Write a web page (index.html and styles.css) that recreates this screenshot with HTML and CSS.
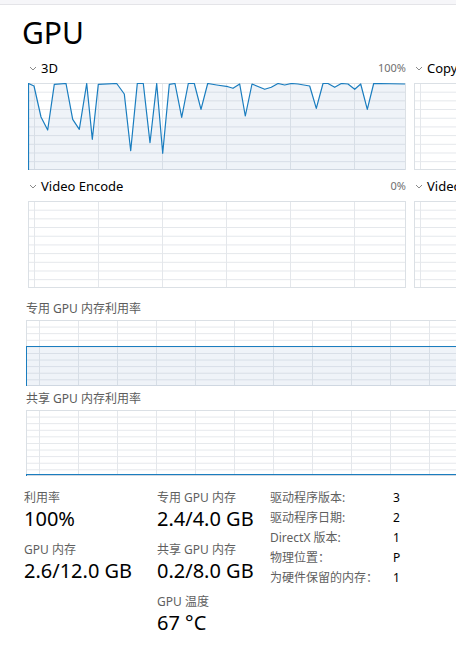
FILE: index.html
```html
<!DOCTYPE html>
<html lang="zh-CN">
<head>
    <meta charset="UTF-8">
    <meta name="viewport" content="width=device-width, initial-scale=1.0">
    <title>GPU</title>
    <link rel="stylesheet" href="styles.css">
</head>
<body>
    <div class="topbar"></div>

    <main class="page">
        <h1 class="title">GPU</h1>

        <section class="engines">
            <div class="engine">
                <div class="engine-head">
                    <svg class="chevron" viewBox="0 0 8 5"><path d="M1 1 L4 4 L7 1"/></svg>
                    <span class="engine-name">3D</span>
                    <span class="engine-pct">100%</span>
                </div>
                <div class="chart">
                    <svg class="chart-plot" viewBox="0 0 378 87" preserveAspectRatio="none">
                        <polygon class="plot-fill" points="0.5,87 0.5,0.5 6,3 13,34 19.7,47 26.3,1.3 38,0.5 44.7,36.3 51.3,46.3 58.7,0.5 64.3,56.3 70.3,1.3 88.7,0.5 96.3,11 102.7,67.7 109.3,0.5 115.3,0.5 122,59.7 128.7,0.5 134.7,70.3 141.3,1.3 147,0.5 153.7,34.3 160.3,0.5 166.3,0.5 173,26.3 179.7,0.5 188.7,2 200,3.7 205,5.3 211.7,1 217.3,33 224,1 236.7,6.3 243.3,4.3 250,0.5 256.7,2 263.3,0.5 270,1 281.7,3 288.3,25.3 295,0.5 300,0.5 306.7,4.3 313.3,0.5 320,1 326.7,6.3 332.7,1 339.3,26.3 345.7,0.5 377,1 377,87"/>
                        <polyline class="plot-line" points="0.5,87 0.5,0.5 6,3 13,34 19.7,47 26.3,1.3 38,0.5 44.7,36.3 51.3,46.3 58.7,0.5 64.3,56.3 70.3,1.3 88.7,0.5 96.3,11 102.7,67.7 109.3,0.5 115.3,0.5 122,59.7 128.7,0.5 134.7,70.3 141.3,1.3 147,0.5 153.7,34.3 160.3,0.5 166.3,0.5 173,26.3 179.7,0.5 188.7,2 200,3.7 205,5.3 211.7,1 217.3,33 224,1 236.7,6.3 243.3,4.3 250,0.5 256.7,2 263.3,0.5 270,1 281.7,3 288.3,25.3 295,0.5 300,0.5 306.7,4.3 313.3,0.5 320,1 326.7,6.3 332.7,1 339.3,26.3 345.7,0.5 377,1"/>
                    </svg>
                </div>
            </div>

            <div class="engine">
                <div class="engine-head">
                    <svg class="chevron" viewBox="0 0 8 5"><path d="M1 1 L4 4 L7 1"/></svg>
                    <span class="engine-name">Copy</span>
                    <span class="engine-pct">0%</span>
                </div>
                <div class="chart"></div>
            </div>

            <div class="engine">
                <div class="engine-head">
                    <svg class="chevron" viewBox="0 0 8 5"><path d="M1 1 L4 4 L7 1"/></svg>
                    <span class="engine-name">Video Encode</span>
                    <span class="engine-pct">0%</span>
                </div>
                <div class="chart"></div>
            </div>

            <div class="engine">
                <div class="engine-head">
                    <svg class="chevron" viewBox="0 0 8 5"><path d="M1 1 L4 4 L7 1"/></svg>
                    <span class="engine-name">Video Decode</span>
                    <span class="engine-pct">0%</span>
                </div>
                <div class="chart"></div>
            </div>
        </section>

        <section class="memory">
            <div class="mem-label">专用 GPU 内存利用率</div>
            <div class="mem-chart">
                <div class="mem-fill" style="height: 60%"></div>
            </div>

            <div class="mem-label">共享 GPU 内存利用率</div>
            <div class="mem-chart">
                <div class="mem-fill" style="height: 2.5%"></div>
            </div>
        </section>

        <section class="stats">
            <div class="stat-col stat-col-first">
                <div class="stat">
                    <div class="stat-label">利用率</div>
                    <div class="stat-value">100%</div>
                </div>
                <div class="stat">
                    <div class="stat-label">GPU 内存</div>
                    <div class="stat-value">2.6/12.0 GB</div>
                </div>
            </div>

            <div class="stat-col stat-col-second">
                <div class="stat">
                    <div class="stat-label">专用 GPU 内存</div>
                    <div class="stat-value">2.4/4.0 GB</div>
                </div>
                <div class="stat">
                    <div class="stat-label">共享 GPU 内存</div>
                    <div class="stat-value">0.2/8.0 GB</div>
                </div>
                <div class="stat">
                    <div class="stat-label">GPU 温度</div>
                    <div class="stat-value">67 °C</div>
                </div>
            </div>

            <dl class="props">
                <dt>驱动程序版本:</dt><dd>3</dd>
                <dt>驱动程序日期:</dt><dd>2</dd>
                <dt>DirectX 版本:</dt><dd>1</dd>
                <dt>物理位置：</dt><dd>P</dd>
                <dt>为硬件保留的内存：</dt><dd>1</dd>
            </dl>
        </section>
    </main>
</body>
</html>
```

FILE: styles.css
```css
* {
    margin: 0;
    padding: 0;
    box-sizing: border-box;
}

body {
    font-family: 'Noto Sans', 'Noto Sans CJK SC', sans-serif;
    background: #ffffff;
    color: #000000;
    overflow: hidden;
    width: 456px;
    height: 650px;
}

.topbar {
    height: 5px;
    background: #f6f6f9;
    border-bottom: 1px solid #e4e4e8;
}

.title {
    font-size: 30px;
    font-weight: 400;
    line-height: 36px;
    margin: 10px 0 9px 22px;
}

/* engine graphs */
.engines {
    display: grid;
    grid-template-columns: 378px 378px;
    column-gap: 8px;
    row-gap: 8px;
    margin-left: 28px;
}

.engine-head {
    display: flex;
    align-items: center;
    height: 16px;
    margin-bottom: 7px;
    padding-left: 1px;
}

.chevron {
    width: 8px;
    height: 5px;
    margin-right: 4px;
    fill: none;
    stroke: #8a8a8a;
    stroke-width: 1;
}

.engine-name {
    font-size: 13px;
    line-height: 16px;
}

.engine-pct {
    margin-left: auto;
    font-size: 11px;
    line-height: 16px;
    color: #6f6f6f;
}

.chart {
    height: 87px;
    box-shadow: inset 0 0 0 1px #dbe0e5;
    background-color: #ffffff;
    background-image:
        linear-gradient(to right, #e4e7eb 0, #e4e7eb 1px, transparent 1px),
        linear-gradient(to bottom, #e4e7eb 0, #e4e7eb 1px, transparent 1px);
    background-size: 64px 100%, 100% 8.7px;
    background-position: 6px 0, 0 0;
}

.chart-plot {
    display: block;
    width: 100%;
    height: 100%;
}

.plot-fill {
    fill: rgba(120, 160, 200, 0.12);
}

.plot-line {
    fill: none;
    stroke: #1a7dbf;
    stroke-width: 1.2;
    stroke-linejoin: round;
}

/* memory graphs */
.memory {
    margin: 13px 0 0 26px;
}

.mem-label {
    font-size: 12px;
    line-height: 16px;
    color: #5c5c5c;
    margin-bottom: 3px;
}

.mem-chart {
    width: 480px;
    height: 66px;
    display: flex;
    flex-direction: column;
    justify-content: flex-end;
    margin-bottom: 5px;
    box-shadow: inset 0 0 0 1px #dbe0e5;
    background-image:
        linear-gradient(to right, #e4e7eb 0, #e4e7eb 1px, transparent 1px),
        linear-gradient(to bottom, #e4e7eb 0, #e4e7eb 1px, transparent 1px);
    background-size: 39px 100%, 100% 6.6px;
    background-position: 13px 0, 0 0;
}

.mem-fill {
    min-height: 2px;
    background: rgba(120, 160, 200, 0.12);
    border-top: 1px solid #1a7dbf;
    border-left: 1px solid #1a7dbf;
}

/* stats */
.stats {
    display: flex;
    align-items: flex-start;
    margin: 12px 0 0 24px;
}

.stat-col {
    display: flex;
    flex-direction: column;
    gap: 10px;
    padding-top: 2px;
}

.stat-col-first {
    width: 133px;
}

.stat-col-second {
    width: 113px;
}

.stat-label {
    font-size: 12px;
    line-height: 16px;
    color: #5f5f5f;
}

.stat-value {
    font-size: 20px;
    line-height: 26px;
}

.props {
    display: grid;
    grid-template-columns: 123px auto;
    align-content: start;
    font-size: 12px;
    line-height: 20px;
}

.props dt {
    color: #5f5f5f;
}

.props dd {
    color: #000000;
}
```
